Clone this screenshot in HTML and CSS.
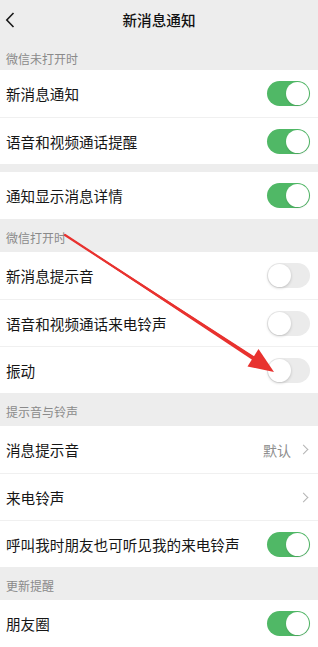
FILE: index.html
```html
<!DOCTYPE html>
<html lang="zh-CN">

<head>
    <meta charset="UTF-8">
    <meta name="viewport" content="width=device-width, initial-scale=1.0">
    <title>新消息通知</title>
    <link rel="stylesheet" href="styles.css">
</head>

<body>

    <!-- Top bar -->
    <header class="topbar">
        <svg class="back" width="10" height="16" viewBox="0 0 10 16">
            <path d="M8.5 1 L1.8 8 L8.5 15" fill="none" stroke="#1a1a1a" stroke-width="1.6" />
        </svg>
        <div class="title">新消息通知</div>
    </header>

    <!-- WeChat closed -->
    <div class="label first">微信未打开时</div>
    <div class="group">
        <div class="row">
            <span class="text">新消息通知</span>
            <span class="switch on"></span>
        </div>
        <div class="row">
            <span class="text">语音和视频通话提醒</span>
            <span class="switch on"></span>
        </div>
    </div>
    <div class="gap"></div>
    <div class="group">
        <div class="row">
            <span class="text">通知显示消息详情</span>
            <span class="switch on"></span>
        </div>
    </div>

    <!-- WeChat open -->
    <div class="label">微信打开时</div>
    <div class="group">
        <div class="row">
            <span class="text">新消息提示音</span>
            <span class="switch"></span>
        </div>
        <div class="row">
            <span class="text">语音和视频通话来电铃声</span>
            <span class="switch"></span>
        </div>
        <div class="row">
            <span class="text">振动</span>
            <span class="switch"></span>
        </div>
    </div>

    <!-- Sounds -->
    <div class="label">提示音与铃声</div>
    <div class="group">
        <div class="row">
            <span class="text">消息提示音</span>
            <span class="extra">默认<span class="chev"></span></span>
        </div>
        <div class="row">
            <span class="text">来电铃声</span>
            <span class="extra"><span class="chev"></span></span>
        </div>
        <div class="row">
            <span class="text">呼叫我时朋友也可听见我的来电铃声</span>
            <span class="switch on"></span>
        </div>
    </div>

    <!-- Updates -->
    <div class="label">更新提醒</div>
    <div class="group">
        <div class="row">
            <span class="text">朋友圈</span>
            <span class="switch on"></span>
        </div>
    </div>

    <!-- Red annotation arrow drawn over the page -->
    <svg class="arrow" width="318" height="647" viewBox="0 0 318 647">
        <polygon points="65,234.5 256,357.5 254,361 65,235.5" fill="#e8322f" />
        <line x1="65" y1="235" x2="255" y2="359" stroke="#e8322f" stroke-width="2.2" stroke-linecap="round" />
        <polygon points="274,372 247.5,366.5 258.5,349" fill="#e8322f" />
    </svg>

</body>

</html>
```

FILE: styles.css
```css
/* General Reset */
* {
    margin: 0;
    padding: 0;
    box-sizing: border-box;
}

body {
    font-family: "Noto Sans CJK SC", "Noto Sans", sans-serif;
    background-color: #ededed;
    color: #161616;
    width: 318px;
    height: 647px;
    overflow: hidden;
    position: relative;
}

/* Top bar */
.topbar {
    height: 42px;
    display: flex;
    align-items: center;
    justify-content: center;
    position: relative;
}

.topbar .back {
    position: absolute;
    left: 5px;
    top: 12px;
}

.topbar .title {
    font-size: 14.6px;
    font-weight: 500;
    color: #111;
    margin-top: -4px;
}

/* Section labels */
.label {
    height: 33px;
    font-size: 12px;
    color: #8a8a8a;
    padding: 0 6px;
    display: flex;
    align-items: flex-end;
    padding-bottom: 6px;
}

.label.first {
    height: 28px;
    padding-bottom: 3px;
}

.gap {
    height: 8px;
}

/* Rows */
.group {
    background-color: white;
}

.row {
    height: 47px;
    display: flex;
    align-items: center;
    justify-content: space-between;
    padding: 0 8px 0 6px;
    position: relative;
}

.row + .row {
    border-top: 1px solid #f0f0f0;
}

.row .text {
    font-size: 14.6px;
}

.extra {
    display: flex;
    align-items: center;
    font-size: 14px;
    color: #8d8d8d;
}

.chev {
    width: 7px;
    height: 7px;
    border-top: 1.3px solid #b4b4b4;
    border-right: 1.3px solid #b4b4b4;
    transform: rotate(45deg);
    margin: 0 3px 0 9px;
}

/* Switches */
.switch {
    width: 43px;
    height: 25px;
    border-radius: 13px;
    background-color: #ebebeb;
    position: relative;
    flex-shrink: 0;
}

.switch::after {
    content: "";
    position: absolute;
    top: 1px;
    left: 1px;
    width: 23px;
    height: 23px;
    border-radius: 50%;
    background-color: white;
    box-shadow: 0 1px 3px rgba(0, 0, 0, 0.2);
}

.switch.on {
    background-color: #50b866;
}

.switch.on::after {
    left: 19px;
    box-shadow: 0 1px 2px rgba(0, 0, 0, 0.12);
}

/* Annotation */
.arrow {
    position: absolute;
    left: 0;
    top: 0;
    pointer-events: none;
}
```
